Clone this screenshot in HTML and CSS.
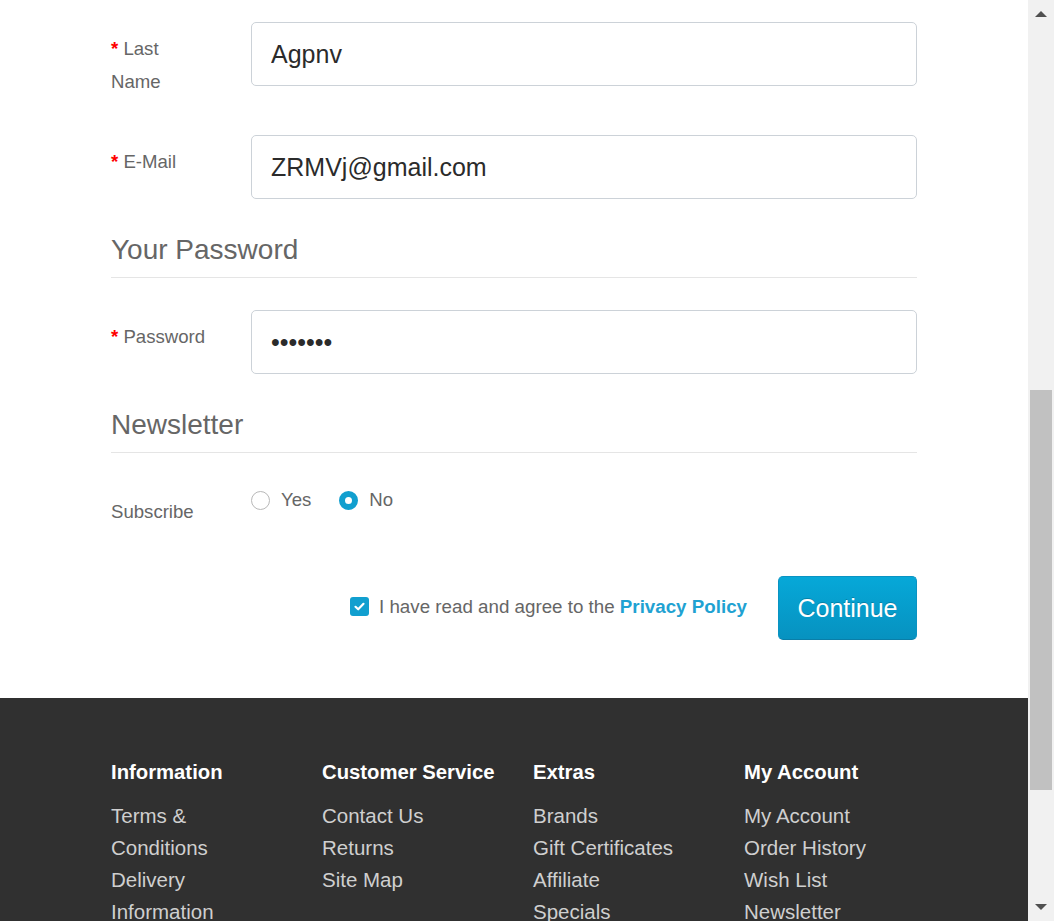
FILE: index.html
```html
<!DOCTYPE html>
<html lang="en">
<head>
<meta charset="utf-8">
<title>Register Account</title>
<link rel="stylesheet" href="styles.css">
</head>
<body>
<div class="window">
  <div class="viewport">
    <div class="content">
      <div class="container">
        <div class="row row-tall">
          <label class="label required">Last Name</label>
          <input class="field" type="text" value="Agpnv">
        </div>
        <div class="row">
          <label class="label required">E-Mail</label>
          <input class="field" type="email" value="ZRMVj@gmail.com">
        </div>
        <h2 class="legend">Your Password</h2>
        <div class="row">
          <label class="label required">Password</label>
          <input class="field" type="password" value="1234567">
        </div>
        <h2 class="legend">Newsletter</h2>
        <div class="row row-radio">
          <span class="label">Subscribe</span>
          <div class="radios">
            <label class="radio"><input type="radio" name="newsletter"><span>Yes</span></label>
            <label class="radio"><input type="radio" name="newsletter" checked><span>No</span></label>
          </div>
        </div>
        <div class="actions">
          <label class="agree">
            <span class="checkbox"><svg viewBox="0 0 19 19" width="19" height="19"><path d="M5.5 9.8 L8.2 12.3 L13.5 6.8" fill="none" stroke="#fff" stroke-width="2.2" stroke-linecap="round" stroke-linejoin="round"/></svg></span>
            <span class="agree-text">I have read and agree to the <a class="link" href="#">Privacy Policy</a></span>
          </label>
          <button class="btn" type="button">Continue</button>
        </div>
      </div>
    </div>
    <footer class="footer">
      <div class="container footer-grid">
        <div class="col">
          <h5 class="col-title">Information</h5>
          <a class="col-link" href="#">Terms &amp; Conditions</a>
          <a class="col-link" href="#">Delivery Information</a>
          <a class="col-link" href="#">About Us</a>
          <a class="col-link" href="#">Privacy Policy</a>
        </div>
        <div class="col">
          <h5 class="col-title">Customer Service</h5>
          <a class="col-link" href="#">Contact Us</a>
          <a class="col-link" href="#">Returns</a>
          <a class="col-link" href="#">Site Map</a>
        </div>
        <div class="col">
          <h5 class="col-title">Extras</h5>
          <a class="col-link" href="#">Brands</a>
          <a class="col-link" href="#">Gift Certificates</a>
          <a class="col-link" href="#">Affiliate</a>
          <a class="col-link" href="#">Specials</a>
        </div>
        <div class="col">
          <h5 class="col-title">My Account</h5>
          <a class="col-link" href="#">My Account</a>
          <a class="col-link" href="#">Order History</a>
          <a class="col-link" href="#">Wish List</a>
          <a class="col-link" href="#">Newsletter</a>
        </div>
      </div>
    </footer>
  </div>
  <div class="scrollbar">
    <div class="sb-btn"><span class="arrow-up"></span></div>
    <div class="sb-track"><div class="sb-thumb"></div></div>
    <div class="sb-btn"><span class="arrow-down"></span></div>
  </div>
</div>
</body>
</html>
```

FILE: styles.css
```css
* { box-sizing: border-box; }

html, body {
  margin: 0;
  padding: 0;
  height: 921px;
  overflow: hidden;
  background: #fff;
}

body {
  font-family: "Liberation Sans", Arial, sans-serif;
  color: #666;
}

.window {
  display: flex;
  width: 1054px;
  height: 921px;
}

.viewport {
  flex: 1;
  height: 921px;
  overflow: hidden;
  background: #fff;
}

.content {
  padding: 22px 0 58px;
}

.container {
  width: 806px;
  margin: 0 auto;
}

.row {
  display: grid;
  grid-template-columns: 140px 666px;
  align-items: start;
  margin-bottom: 31px;
}

.row-tall {
  margin-bottom: 37.5px;
}

.label {
  display: block;
  padding: 9.5px 40px 0 0;
  font-size: 18.6px;
  line-height: 33px;
  color: #666;
}

.required::before {
  content: "* ";
  color: #f00;
  font-weight: bold;
}

.field {
  display: block;
  width: 666px;
  height: 64px;
  margin: 0;
  padding: 0 19px;
  border: 1px solid #ccd2d8;
  border-radius: 5px;
  background: #fff;
  font-family: "Liberation Sans", Arial, sans-serif;
  font-size: 25px;
  color: #2b2b2b;
  outline: none;
}

.legend {
  margin: 0 0 32px;
  padding: 0 0 7px;
  border-bottom: 1px solid #e5e5e5;
  font-size: 28px;
  line-height: 40px;
  font-weight: normal;
  color: #666;
}

.row-radio {
  margin-bottom: 0;
}

.radios {
  display: flex;
  align-items: center;
  height: 30px;
  gap: 28px;
}

.radio {
  display: inline-flex;
  align-items: center;
  gap: 11px;
  font-size: 18.6px;
  color: #666;
}

.radio input {
  appearance: none;
  -webkit-appearance: none;
  width: 19px;
  height: 19px;
  margin: 0;
  border: 1px solid #b8b8b8;
  border-radius: 50%;
  background: #fff;
}

.radio input:checked {
  border: 6px solid #119fcf;
}

.actions {
  display: flex;
  justify-content: flex-end;
  align-items: center;
  margin-top: 48.5px;
  height: 64px;
  gap: 31px;
}

.agree {
  display: flex;
  align-items: center;
  gap: 10px;
  font-size: 18.75px;
  color: #666;
  margin-top: -3px;
}

.checkbox {
  display: block;
  width: 19px;
  height: 19px;
  border-radius: 3px;
  background: #119fcf;
}

.checkbox svg { display: block; }

.link {
  color: #1fa2d2;
  font-weight: bold;
  text-decoration: none;
}

.btn {
  width: 139px;
  height: 64px;
  padding: 0;
  border: 1px solid #0a93c2;
  border-bottom-color: #0a7ea8;
  border-radius: 5px;
  background: linear-gradient(to bottom, #06a8d8, #0792c0);
  color: #fff;
  font-family: "Liberation Sans", Arial, sans-serif;
  font-size: 25px;
  text-shadow: 0 -1px 0 rgba(0, 0, 0, 0.2);
}

.footer {
  background: #303030;
  padding: 58px 0 40px;
  color: #e2e2e2;
}

.footer-grid {
  display: grid;
  grid-template-columns: 211px 211px 211px 1fr;
}

.col {
  padding-right: 45px;
}

.col-title {
  margin: 0 0 12px;
  font-size: 20.3px;
  line-height: 32px;
  font-weight: bold;
  color: #fff;
  white-space: nowrap;
}

.col-link {
  display: block;
  font-size: 20.5px;
  line-height: 32px;
  color: #cfcfcf;
  text-decoration: none;
}

.scrollbar {
  width: 26px;
  height: 921px;
  background: #f1f1f1;
  display: flex;
  flex-direction: column;
}

.sb-btn {
  height: 28px;
  display: flex;
  align-items: center;
  justify-content: center;
}

.arrow-up {
  width: 0;
  height: 0;
  border-left: 6px solid transparent;
  border-right: 6px solid transparent;
  border-bottom: 6px solid #505050;
}

.arrow-down {
  width: 0;
  height: 0;
  border-left: 6px solid transparent;
  border-right: 6px solid transparent;
  border-top: 6px solid #505050;
}

.sb-track {
  flex: 1;
}

.sb-thumb {
  margin: 362px 2px 0;
  height: 400px;
  background: #c1c1c1;
}
```
